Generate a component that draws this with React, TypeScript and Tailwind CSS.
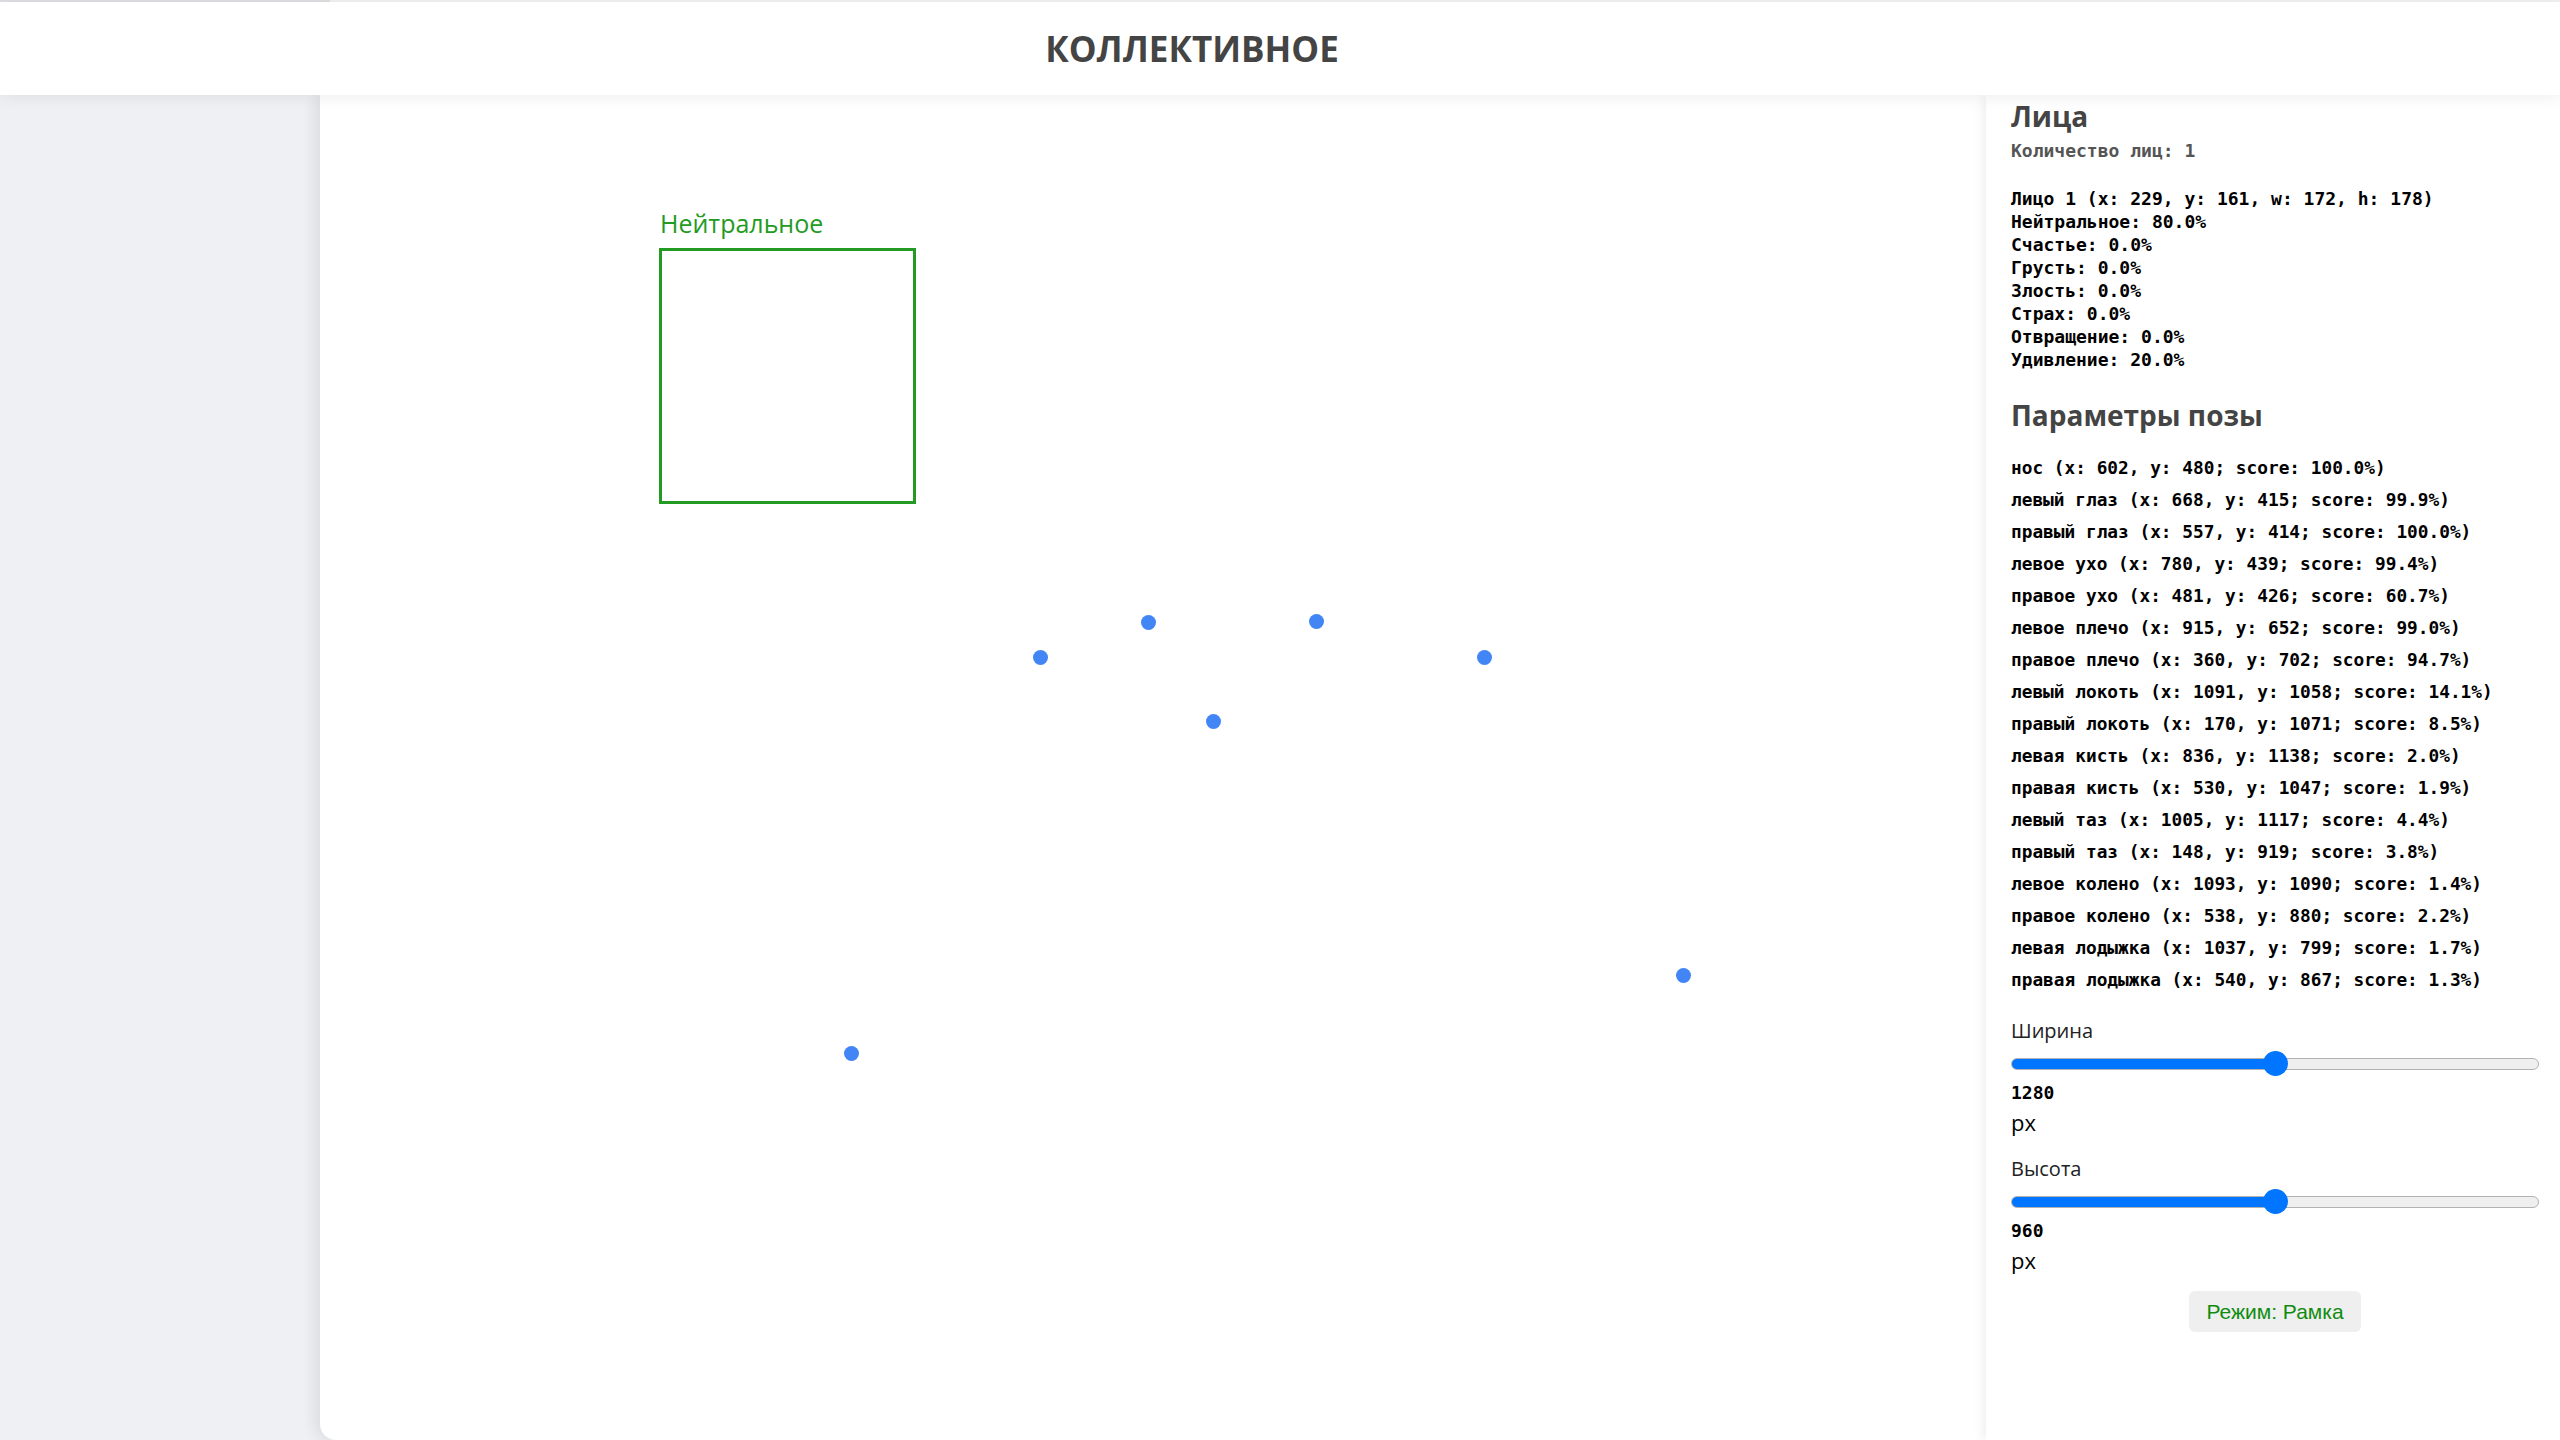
const faceLines = [
  "Лицо 1 (x: 229, y: 161, w: 172, h: 178)",
  "Нейтральное: 80.0%",
  "Счастье: 0.0%",
  "Грусть: 0.0%",
  "Злость: 0.0%",
  "Страх: 0.0%",
  "Отвращение: 0.0%",
  "Удивление: 20.0%",
];

const poseLines = [
  "нос (x: 602, y: 480; score: 100.0%)",
  "левый глаз (x: 668, y: 415; score: 99.9%)",
  "правый глаз (x: 557, y: 414; score: 100.0%)",
  "левое ухо (x: 780, y: 439; score: 99.4%)",
  "правое ухо (x: 481, y: 426; score: 60.7%)",
  "левое плечо (x: 915, y: 652; score: 99.0%)",
  "правое плечо (x: 360, y: 702; score: 94.7%)",
  "левый локоть (x: 1091, y: 1058; score: 14.1%)",
  "правый локоть (x: 170, y: 1071; score: 8.5%)",
  "левая кисть (x: 836, y: 1138; score: 2.0%)",
  "правая кисть (x: 530, y: 1047; score: 1.9%)",
  "левый таз (x: 1005, y: 1117; score: 4.4%)",
  "правый таз (x: 148, y: 919; score: 3.8%)",
  "левое колено (x: 1093, y: 1090; score: 1.4%)",
  "правое колено (x: 538, y: 880; score: 2.2%)",
  "левая лодыжка (x: 1037, y: 799; score: 1.7%)",
  "правая лодыжка (x: 540, y: 867; score: 1.3%)",
];

// keypoints drawn on the canvas (card coordinates, centre of dot)
const dots = [
  { x: 720, y: 562 },
  { x: 828, y: 527 },
  { x: 996, y: 526 },
  { x: 1164, y: 562 },
  { x: 893, y: 626 },
  { x: 1363, y: 880 },
  { x: 531, y: 958 },
];

const SizeSlider = ({ label, value, percent }: { label: string; value: number; percent: number }) => {
  return (
    <div className="flex flex-col">
      <div className="text-[20px] leading-[28px] text-[#222]">{label}</div>
      <div className="h-[25px] mt-[6px] flex items-center">
        <input
          type="range"
          min={0}
          max={value * 2}
          defaultValue={value}
          className="w-full h-3 appearance-none rounded-full border border-[#b2b2b2] outline-none [&::-webkit-slider-thumb]:appearance-none [&::-webkit-slider-thumb]:w-[25px] [&::-webkit-slider-thumb]:h-[25px] [&::-webkit-slider-thumb]:rounded-full [&::-webkit-slider-thumb]:bg-[#0075ff] [&::-webkit-slider-thumb]:border-0"
          style={{
            background: `linear-gradient(to right, #0075ff ${percent}%, #efefef ${percent}%)`,
          }}
        />
      </div>
      <div className="mt-[5px] font-['DejaVu_Sans_Mono',monospace] font-bold text-[18px] leading-[23px] text-black">
        {value}
      </div>
      <div className="mt-[4px] text-[22px] leading-[28px] text-black">px</div>
    </div>
  );
};

export default function App() {
  return (
    <div className="h-screen flex flex-col bg-[#eef0f4] overflow-hidden font-['Open_Sans',sans-serif]">
      <div className="h-[2px] flex shrink-0">
        <div className="w-[330px] bg-[#dcdde1]"></div>
        <div className="flex-1 bg-[#efefef]"></div>
      </div>
      <header className="relative z-20 h-[93px] shrink-0 bg-white shadow-[0_4px_14px_rgba(0,0,0,0.06)] flex items-center justify-center pr-[176px]">
        <h1 className="text-[35px] font-bold text-[#444] leading-none">КОЛЛЕКТИВНОЕ</h1>
      </header>
      <div className="flex-1 flex min-h-0">
        <aside className="w-[320px] shrink-0"></aside>
        <main className="relative flex-1 bg-white rounded-bl-2xl shadow-[-6px_0_14px_rgba(0,0,0,0.08)] overflow-hidden">
          <div className="absolute left-[340px] top-[116px] text-[25px] leading-none text-[#239b23]">
            Нейтральное
          </div>
          <div className="absolute left-[339px] top-[153px] w-[257px] h-[256px] border-[3px] border-[#239b23]"></div>
          {dots.map((d, i) => (
            <div
              key={i}
              className="absolute w-[15px] h-[15px] rounded-full bg-[#4285f4]"
              style={{ left: d.x - 7.5, top: d.y - 7.5 }}
            ></div>
          ))}
        </main>
        <section className="relative z-10 w-[574px] shrink-0 bg-white shadow-[-4px_0_10px_rgba(0,0,0,0.06)] pl-[25px] pr-[21px] pt-1 flex flex-col">
          <h2 className="text-[28px] font-bold leading-[34px] text-[#444]">Лица</h2>
          <div className="mt-[6px] font-['DejaVu_Sans_Mono',monospace] font-bold text-[18px] leading-[23px]">
            <div className="text-[#555]">Количество лиц: 1</div>
            <div className="mt-[25px] text-black">
              {faceLines.map((line) => (
                <div key={line}>{line}</div>
              ))}
            </div>
          </div>
          <h2 className="mt-[27px] text-[28px] font-bold leading-[34px] text-[#444]">Параметры позы</h2>
          <div className="mt-[20px] font-['DejaVu_Sans_Mono',monospace] font-bold text-[17.8px] leading-[32px] text-black">
            {poseLines.map((line) => (
              <div key={line}>{line}</div>
            ))}
          </div>
          <div className="mt-[21px] flex flex-col gap-[19px]">
            <SizeSlider label="Ширина" value={1280} percent={50} />
            <SizeSlider label="Высота" value={960} percent={50} />
          </div>
          <div className="mt-[17px] flex justify-center">
            <button className="h-[41px] w-[172px] rounded-md bg-[#efefef] font-['Liberation_Sans',sans-serif] text-[21px] text-[#0f8c0f]">
              Режим: Рамка
            </button>
          </div>
        </section>
      </div>
    </div>
  );
}
